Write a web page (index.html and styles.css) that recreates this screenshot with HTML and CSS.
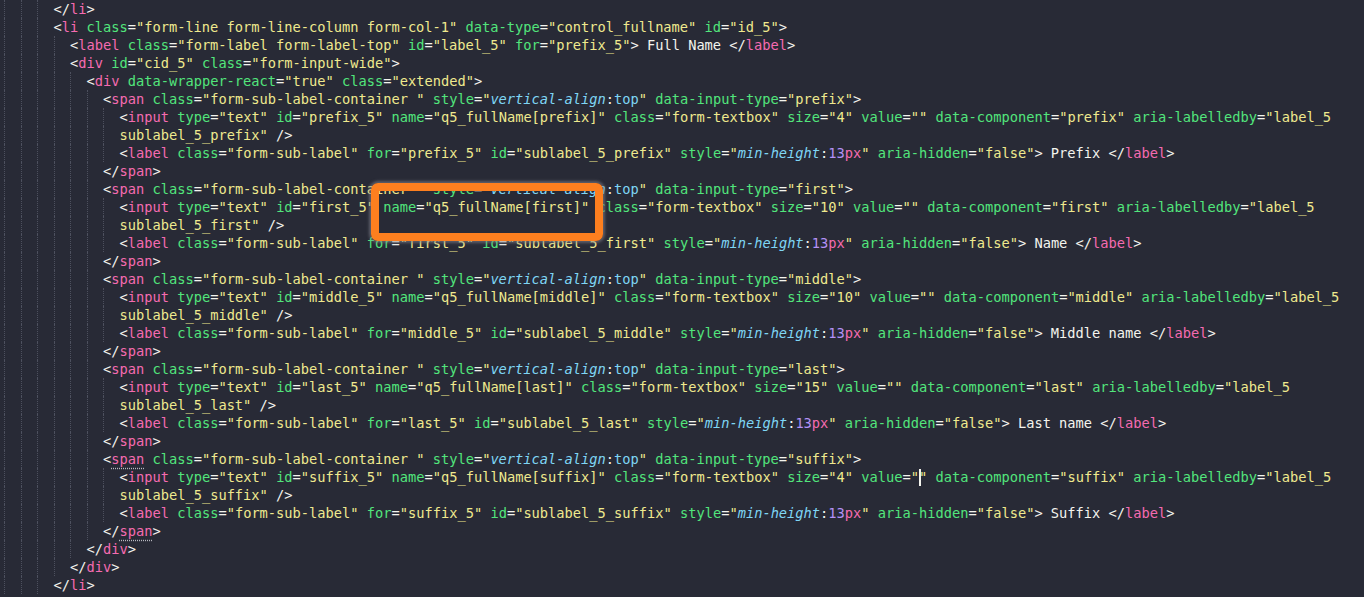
FILE: index.html
```html
<!DOCTYPE html>
<html>
<head>
<meta charset="utf-8">
<link rel="stylesheet" href="styles.css">
</head>
<body>
<div class="editor">
<div class="row"><i class="g"></i><i class="g"></i><i class="g"></i><span class="code">&lt;/<span class="t">li</span>&gt;</span></div>
<div class="row"><i class="g"></i><i class="g"></i><i class="g"></i><span class="code">&lt;<span class="t">li</span> <span class="a">class</span>=<span class="s">"form-line form-line-column form-col-1"</span> <span class="a">data-type</span>=<span class="s">"control_fullname"</span> <span class="a">id</span>=<span class="s">"id_5"</span>&gt;</span></div>
<div class="row"><i class="g"></i><i class="g"></i><i class="g"></i><i class="g"></i><span class="code">&lt;<span class="t">label</span> <span class="a">class</span>=<span class="s">"form-label form-label-top"</span> <span class="a">id</span>=<span class="s">"label_5"</span> <span class="a">for</span>=<span class="s">"prefix_5"</span>&gt; Full Name &lt;/<span class="t">label</span>&gt;</span></div>
<div class="row"><i class="g"></i><i class="g"></i><i class="g"></i><i class="g"></i><span class="code">&lt;<span class="t">div</span> <span class="a">id</span>=<span class="s">"cid_5"</span> <span class="a">class</span>=<span class="s">"form-input-wide"</span>&gt;</span></div>
<div class="row"><i class="g"></i><i class="g"></i><i class="g"></i><i class="g"></i><i class="g"></i><span class="code">&lt;<span class="t">div</span> <span class="a">data-wrapper-react</span>=<span class="s">"true"</span> <span class="a">class</span>=<span class="s">"extended"</span>&gt;</span></div>
<div class="row"><i class="g"></i><i class="g"></i><i class="g"></i><i class="g"></i><i class="g"></i><i class="g"></i><span class="code">&lt;<span class="t">span</span> <span class="a">class</span>=<span class="s">"form-sub-label-container "</span> <span class="a">style</span>=<span class="s">"</span><span class="c">vertical-align</span>:<span class="v">top</span><span class="s">"</span> <span class="a">data-input-type</span>=<span class="s">"prefix"</span>&gt;</span></div>
<div class="row"><i class="g"></i><i class="g"></i><i class="g"></i><i class="g"></i><i class="g"></i><i class="g"></i><i class="g"></i><span class="code">&lt;<span class="t">input</span> <span class="a">type</span>=<span class="s">"text"</span> <span class="a">id</span>=<span class="s">"prefix_5"</span> <span class="a">name</span>=<span class="s">"q5_fullName[prefix]"</span> <span class="a">class</span>=<span class="s">"form-textbox"</span> <span class="a">size</span>=<span class="s">"4"</span> <span class="a">value</span>=<span class="s">""</span> <span class="a">data-component</span>=<span class="s">"prefix"</span> <span class="a">aria-labelledby</span>=<span class="s">"label_5</span></span></div>
<div class="row"><i class="g"></i><i class="g"></i><i class="g"></i><i class="g"></i><i class="g"></i><i class="g"></i><i class="g"></i><span class="code"><span class="s">sublabel_5_prefix"</span> /&gt;</span></div>
<div class="row"><i class="g"></i><i class="g"></i><i class="g"></i><i class="g"></i><i class="g"></i><i class="g"></i><i class="g"></i><span class="code">&lt;<span class="t">label</span> <span class="a">class</span>=<span class="s">"form-sub-label"</span> <span class="a">for</span>=<span class="s">"prefix_5"</span> <span class="a">id</span>=<span class="s">"sublabel_5_prefix"</span> <span class="a">style</span>=<span class="s">"</span><span class="c">min-height</span>:<span class="n">13</span><span class="u">px</span><span class="s">"</span> <span class="a">aria-hidden</span>=<span class="s">"false"</span>&gt; Prefix &lt;/<span class="t">label</span>&gt;</span></div>
<div class="row"><i class="g"></i><i class="g"></i><i class="g"></i><i class="g"></i><i class="g"></i><i class="g"></i><span class="code">&lt;/<span class="t">span</span>&gt;</span></div>
<div class="row"><i class="g"></i><i class="g"></i><i class="g"></i><i class="g"></i><i class="g"></i><i class="g"></i><span class="code">&lt;<span class="t">span</span> <span class="a">class</span>=<span class="s">"form-sub-label-container "</span> <span class="a">style</span>=<span class="s">"</span><span class="c">vertical-align</span>:<span class="v">top</span><span class="s">"</span> <span class="a">data-input-type</span>=<span class="s">"first"</span>&gt;</span></div>
<div class="row"><i class="g"></i><i class="g"></i><i class="g"></i><i class="g"></i><i class="g"></i><i class="g"></i><i class="g"></i><span class="code">&lt;<span class="t">input</span> <span class="a">type</span>=<span class="s">"text"</span> <span class="a">id</span>=<span class="s">"first_5"</span> <span class="a">name</span>=<span class="s">"q5_fullName[first]"</span> <span class="a">class</span>=<span class="s">"form-textbox"</span> <span class="a">size</span>=<span class="s">"10"</span> <span class="a">value</span>=<span class="s">""</span> <span class="a">data-component</span>=<span class="s">"first"</span> <span class="a">aria-labelledby</span>=<span class="s">"label_5</span></span></div>
<div class="row"><i class="g"></i><i class="g"></i><i class="g"></i><i class="g"></i><i class="g"></i><i class="g"></i><i class="g"></i><span class="code"><span class="s">sublabel_5_first"</span> /&gt;</span></div>
<div class="row"><i class="g"></i><i class="g"></i><i class="g"></i><i class="g"></i><i class="g"></i><i class="g"></i><i class="g"></i><span class="code">&lt;<span class="t">label</span> <span class="a">class</span>=<span class="s">"form-sub-label"</span> <span class="a">for</span>=<span class="s">"first_5"</span> <span class="a">id</span>=<span class="s">"sublabel_5_first"</span> <span class="a">style</span>=<span class="s">"</span><span class="c">min-height</span>:<span class="n">13</span><span class="u">px</span><span class="s">"</span> <span class="a">aria-hidden</span>=<span class="s">"false"</span>&gt; Name &lt;/<span class="t">label</span>&gt;</span></div>
<div class="row"><i class="g"></i><i class="g"></i><i class="g"></i><i class="g"></i><i class="g"></i><i class="g"></i><span class="code">&lt;/<span class="t">span</span>&gt;</span></div>
<div class="row"><i class="g"></i><i class="g"></i><i class="g"></i><i class="g"></i><i class="g"></i><i class="g"></i><span class="code">&lt;<span class="t">span</span> <span class="a">class</span>=<span class="s">"form-sub-label-container "</span> <span class="a">style</span>=<span class="s">"</span><span class="c">vertical-align</span>:<span class="v">top</span><span class="s">"</span> <span class="a">data-input-type</span>=<span class="s">"middle"</span>&gt;</span></div>
<div class="row"><i class="g"></i><i class="g"></i><i class="g"></i><i class="g"></i><i class="g"></i><i class="g"></i><i class="g"></i><span class="code">&lt;<span class="t">input</span> <span class="a">type</span>=<span class="s">"text"</span> <span class="a">id</span>=<span class="s">"middle_5"</span> <span class="a">name</span>=<span class="s">"q5_fullName[middle]"</span> <span class="a">class</span>=<span class="s">"form-textbox"</span> <span class="a">size</span>=<span class="s">"10"</span> <span class="a">value</span>=<span class="s">""</span> <span class="a">data-component</span>=<span class="s">"middle"</span> <span class="a">aria-labelledby</span>=<span class="s">"label_5</span></span></div>
<div class="row"><i class="g"></i><i class="g"></i><i class="g"></i><i class="g"></i><i class="g"></i><i class="g"></i><i class="g"></i><span class="code"><span class="s">sublabel_5_middle"</span> /&gt;</span></div>
<div class="row"><i class="g"></i><i class="g"></i><i class="g"></i><i class="g"></i><i class="g"></i><i class="g"></i><i class="g"></i><span class="code">&lt;<span class="t">label</span> <span class="a">class</span>=<span class="s">"form-sub-label"</span> <span class="a">for</span>=<span class="s">"middle_5"</span> <span class="a">id</span>=<span class="s">"sublabel_5_middle"</span> <span class="a">style</span>=<span class="s">"</span><span class="c">min-height</span>:<span class="n">13</span><span class="u">px</span><span class="s">"</span> <span class="a">aria-hidden</span>=<span class="s">"false"</span>&gt; Middle name &lt;/<span class="t">label</span>&gt;</span></div>
<div class="row"><i class="g"></i><i class="g"></i><i class="g"></i><i class="g"></i><i class="g"></i><i class="g"></i><span class="code">&lt;/<span class="t">span</span>&gt;</span></div>
<div class="row"><i class="g"></i><i class="g"></i><i class="g"></i><i class="g"></i><i class="g"></i><i class="g"></i><span class="code">&lt;<span class="t">span</span> <span class="a">class</span>=<span class="s">"form-sub-label-container "</span> <span class="a">style</span>=<span class="s">"</span><span class="c">vertical-align</span>:<span class="v">top</span><span class="s">"</span> <span class="a">data-input-type</span>=<span class="s">"last"</span>&gt;</span></div>
<div class="row"><i class="g"></i><i class="g"></i><i class="g"></i><i class="g"></i><i class="g"></i><i class="g"></i><i class="g"></i><span class="code">&lt;<span class="t">input</span> <span class="a">type</span>=<span class="s">"text"</span> <span class="a">id</span>=<span class="s">"last_5"</span> <span class="a">name</span>=<span class="s">"q5_fullName[last]"</span> <span class="a">class</span>=<span class="s">"form-textbox"</span> <span class="a">size</span>=<span class="s">"15"</span> <span class="a">value</span>=<span class="s">""</span> <span class="a">data-component</span>=<span class="s">"last"</span> <span class="a">aria-labelledby</span>=<span class="s">"label_5</span></span></div>
<div class="row"><i class="g"></i><i class="g"></i><i class="g"></i><i class="g"></i><i class="g"></i><i class="g"></i><i class="g"></i><span class="code"><span class="s">sublabel_5_last"</span> /&gt;</span></div>
<div class="row"><i class="g"></i><i class="g"></i><i class="g"></i><i class="g"></i><i class="g"></i><i class="g"></i><i class="g"></i><span class="code">&lt;<span class="t">label</span> <span class="a">class</span>=<span class="s">"form-sub-label"</span> <span class="a">for</span>=<span class="s">"last_5"</span> <span class="a">id</span>=<span class="s">"sublabel_5_last"</span> <span class="a">style</span>=<span class="s">"</span><span class="c">min-height</span>:<span class="n">13</span><span class="u">px</span><span class="s">"</span> <span class="a">aria-hidden</span>=<span class="s">"false"</span>&gt; Last name &lt;/<span class="t">label</span>&gt;</span></div>
<div class="row"><i class="g"></i><i class="g"></i><i class="g"></i><i class="g"></i><i class="g"></i><i class="g"></i><span class="code">&lt;/<span class="t">span</span>&gt;</span></div>
<div class="row"><i class="g"></i><i class="g"></i><i class="g"></i><i class="g"></i><i class="g"></i><i class="g"></i><span class="code">&lt;<span class="t m">span</span> <span class="a">class</span>=<span class="s">"form-sub-label-container "</span> <span class="a">style</span>=<span class="s">"</span><span class="c">vertical-align</span>:<span class="v">top</span><span class="s">"</span> <span class="a">data-input-type</span>=<span class="s">"suffix"</span>&gt;</span></div>
<div class="row"><i class="g"></i><i class="g"></i><i class="g"></i><i class="g"></i><i class="g"></i><i class="g"></i><i class="g"></i><span class="code">&lt;<span class="t">input</span> <span class="a">type</span>=<span class="s">"text"</span> <span class="a">id</span>=<span class="s">"suffix_5"</span> <span class="a">name</span>=<span class="s">"q5_fullName[suffix]"</span> <span class="a">class</span>=<span class="s">"form-textbox"</span> <span class="a">size</span>=<span class="s">"4"</span> <span class="a">value</span>=<span class="s">"<span class="caret"></span>"</span> <span class="a">data-component</span>=<span class="s">"suffix"</span> <span class="a">aria-labelledby</span>=<span class="s">"label_5</span></span></div>
<div class="row"><i class="g"></i><i class="g"></i><i class="g"></i><i class="g"></i><i class="g"></i><i class="g"></i><i class="g"></i><span class="code"><span class="s">sublabel_5_suffix"</span> /&gt;</span></div>
<div class="row"><i class="g"></i><i class="g"></i><i class="g"></i><i class="g"></i><i class="g"></i><i class="g"></i><i class="g"></i><span class="code">&lt;<span class="t">label</span> <span class="a">class</span>=<span class="s">"form-sub-label"</span> <span class="a">for</span>=<span class="s">"suffix_5"</span> <span class="a">id</span>=<span class="s">"sublabel_5_suffix"</span> <span class="a">style</span>=<span class="s">"</span><span class="c">min-height</span>:<span class="n">13</span><span class="u">px</span><span class="s">"</span> <span class="a">aria-hidden</span>=<span class="s">"false"</span>&gt; Suffix &lt;/<span class="t">label</span>&gt;</span></div>
<div class="row"><i class="g"></i><i class="g"></i><i class="g"></i><i class="g"></i><i class="g"></i><i class="g"></i><span class="code">&lt;/<span class="t m">span</span>&gt;</span></div>
<div class="row"><i class="g"></i><i class="g"></i><i class="g"></i><i class="g"></i><i class="g"></i><span class="code">&lt;/<span class="t">div</span>&gt;</span></div>
<div class="row"><i class="g"></i><i class="g"></i><i class="g"></i><i class="g"></i><span class="code">&lt;/<span class="t">div</span>&gt;</span></div>
<div class="row"><i class="g"></i><i class="g"></i><i class="g"></i><span class="code">&lt;/<span class="t">li</span>&gt;</span></div>
<div class="highlight"></div>
</div>
</body>
</html>
```

FILE: styles.css
```css
html, body {
  margin: 0;
  padding: 0;
  background: #282a36;
  height: 100%;
  overflow: hidden;
}

.editor {
  position: relative;
  padding-left: 4px;
  font-family: "DejaVu Sans Mono", "Liberation Mono", monospace;
  font-size: 13.7px;
  color: #f4f4ee;
}

.row {
  display: flex;
  height: 18px;
  line-height: 18px;
  white-space: pre;
}

.g {
  flex: 0 0 16.5px;
  height: 18px;
  box-sizing: border-box;
  border-left: 1px dotted #4d505e;
}

.code {
  white-space: pre;
}

.t { color: #f56bb0; }
.a { color: #52e57c; }
.s { color: #efe98e; }
.c { color: #7fd6f5; font-style: italic; }
.v { color: #7fd6f5; }
.n { color: #b492f6; }
.u { color: #f56bb0; }

.m {
  text-decoration: underline dotted #b8b8c0;
  text-underline-offset: 4px;
}

.caret {
  display: inline-block;
  width: 0;
  height: 17px;
  border-left: 2px solid #f4f4ee;
  margin-right: -2px;
  vertical-align: -4px;
}

.highlight {
  position: absolute;
  left: 371px;
  top: 183px;
  width: 232px;
  height: 58px;
  box-sizing: border-box;
  border: 8px solid #fd7f1f;
  border-radius: 7px;
  box-shadow: 0 0 3px 2px rgba(130, 130, 140, 0.6);
}
```
